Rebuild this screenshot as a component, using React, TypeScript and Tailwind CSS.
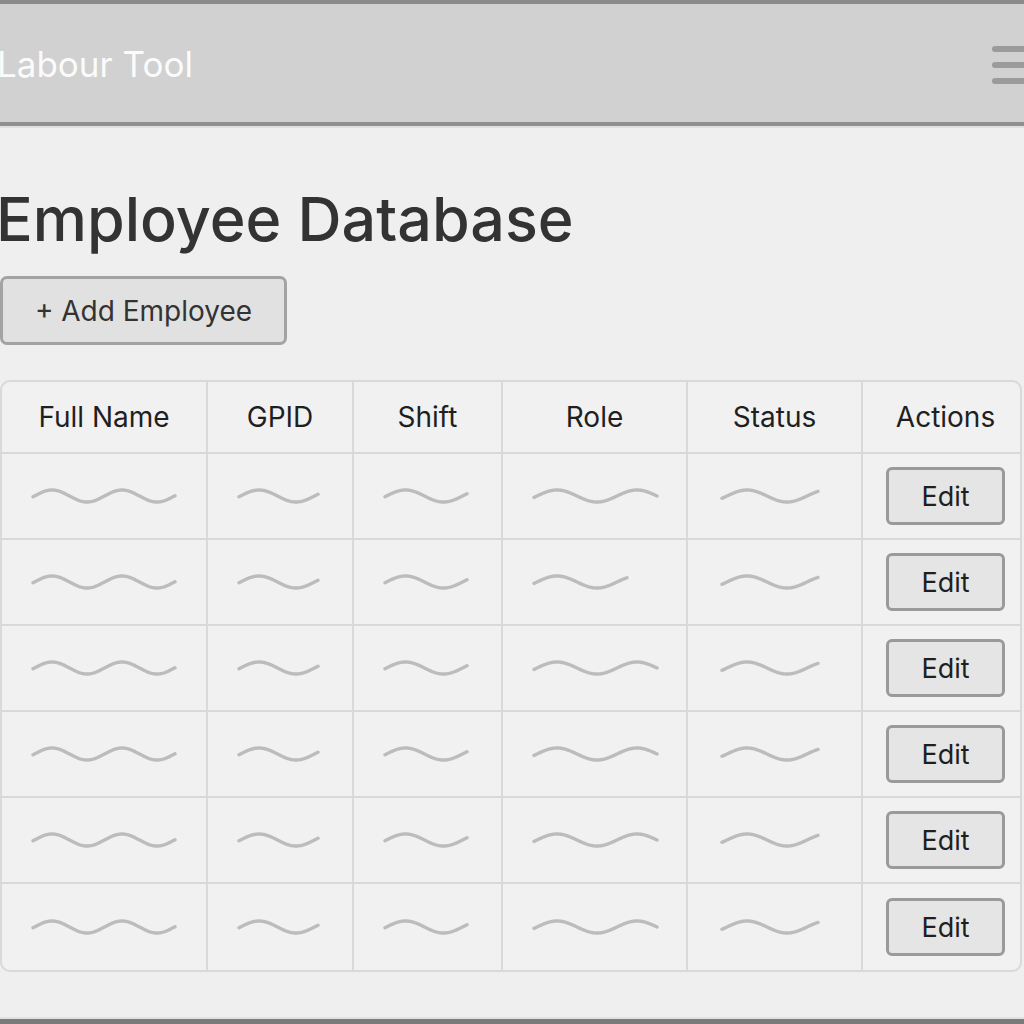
import React from "react";

const Wave = ({ w, p, x0 }: { w: number; p: number; x0: number }) => {
  const A = 6;
  const h = 20;
  const mid = 10;
  let d = "";
  for (let x = 0; x <= w; x += 1) {
    const y = mid - A * Math.sin((2 * Math.PI * (x + x0)) / p);
    d += (x === 0 ? "M" : "L") + x + " " + y.toFixed(2) + " ";
  }
  return (
    <svg width={w + 4} height={h} viewBox={`-2 0 ${w + 4} ${h}`} className="block">
      <path d={d} fill="none" stroke="#bcbcbc" strokeWidth={3.4} strokeLinecap="round" strokeLinejoin="round" />
    </svg>
  );
};

const cols = [
  { label: "Full Name", w: "w-[206px]" },
  { label: "GPID", w: "w-[146px]" },
  { label: "Shift", w: "w-[149px]" },
  { label: "Role", w: "w-[185px]" },
  { label: "Status", w: "w-[175px]" },
];

type WaveSpec = { w: number; p: number; x0: number };

const fullW: WaveSpec = { w: 142, p: 70, x0: -1.5 };
const gpidW: WaveSpec = { w: 79, p: 74, x0: -1.5 };
const shiftW: WaveSpec = { w: 82, p: 76, x0: -1.5 };
const roleW: WaveSpec = { w: 123, p: 80, x0: -3 };
const roleShortW: WaveSpec = { w: 93, p: 80, x0: -3 };
const statusW: WaveSpec = { w: 96, p: 80, x0: -5 };

const rows: WaveSpec[][] = [
  [fullW, gpidW, shiftW, roleW, statusW],
  [fullW, gpidW, shiftW, roleShortW, statusW],
  [fullW, gpidW, shiftW, roleW, statusW],
  [fullW, gpidW, shiftW, roleW, statusW],
  [fullW, gpidW, shiftW, roleW, statusW],
  [fullW, gpidW, shiftW, roleW, statusW],
];

export default function App() {
  return (
    <div className="h-[1024px] w-[1024px] overflow-hidden bg-[#efefef] flex flex-col font-['Inter','Liberation_Sans',Arial,sans-serif]">
      {/* Header */}
      <div className="h-[126px] shrink-0 border-t-4 border-t-[#8a8a8a] border-b-4 border-b-[#8f8f8f] bg-[#d1d1d1] flex items-center justify-between">
        <div className="ml-[-3px] pt-[3px] text-[35px] leading-none text-[#fbfbfb]">Labour Tool</div>
        <div className="mr-[-12px] mt-[4px] flex flex-col gap-[10px]">
          <div className="h-[6px] w-[44px] rounded-full bg-[#9b9b9b]" />
          <div className="h-[6px] w-[44px] rounded-full bg-[#9b9b9b]" />
          <div className="h-[6px] w-[44px] rounded-full bg-[#9b9b9b]" />
        </div>
      </div>
      <div className="h-[2px] shrink-0 bg-[#e0e0e0]" />

      {/* Main */}
      <div className="flex-1 flex flex-col">
        <h1 className="mt-[61px] ml-[-4px] text-[61px] leading-[60px] font-medium text-[#333333]">Employee Database</h1>
        <button className="mt-[27px] h-[69px] w-[287px] rounded-[7px] border-[3px] border-[#a3a3a3] bg-[#e1e1e1] text-[28px] leading-none text-[#333333] flex items-center justify-center">
          + Add Employee
        </button>

        <div className="mt-[35px] w-[1022px] overflow-hidden rounded-[10px] border-2 border-[#d9d9d9] bg-[#f1f1f1]">
          {/* header row */}
          <div className="flex h-[72px] border-b-2 border-[#d9d9d9]">
            {cols.map((c) => (
              <div
                key={c.label}
                className={`${c.w} shrink-0 border-r-2 border-[#d9d9d9] flex items-center justify-center text-[28px] leading-none text-[#1f1f1f]`}
              >
                {c.label}
              </div>
            ))}
            <div className="flex-1 flex items-center justify-center pl-[8px] text-[28px] leading-none text-[#1f1f1f]">Actions</div>
          </div>
          {rows.map((r, i) => (
            <div
              key={i}
              className={`flex h-[86px] ${i < rows.length - 1 ? "border-b-2 border-[#d9d9d9]" : "h-[84px]"}`}
            >
              {r.map((wv, j) => (
                <div
                  key={j}
                  className={`${cols[j].w} shrink-0 border-r-2 border-[#d9d9d9] flex items-center ${j === 4 ? "pl-[32px]" : "pl-[29px]"}`}
                >
                  <Wave w={wv.w} p={wv.p} x0={wv.x0} />
                </div>
              ))}
              <div className="flex-1 flex items-center justify-center pl-[8px]">
                <button className="h-[58px] w-[119px] rounded-[6px] border-[3px] border-[#9a9a9a] bg-[#e5e5e5] text-[27px] leading-none text-[#1f1f1f] flex items-center justify-center">
                  Edit
                </button>
              </div>
            </div>
          ))}
        </div>
      </div>

      {/* Footer bar */}
      <div className="h-[2px] shrink-0 bg-[#e2e2e2]" />
      <div className="h-[5px] shrink-0 bg-[#7b7b7b]" />
    </div>
  );
}
